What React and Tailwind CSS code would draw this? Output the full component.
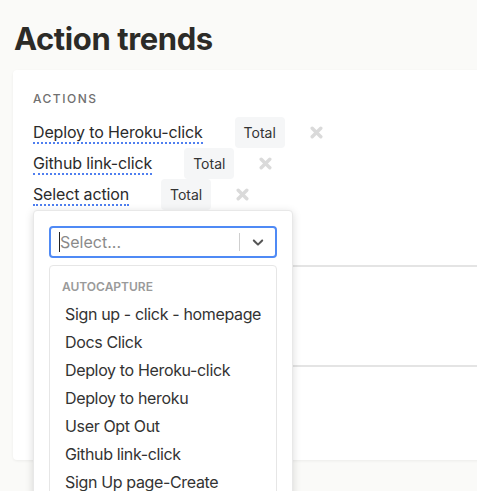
import React from 'react';

const font = { fontFamily: 'Inter, "Liberation Sans", sans-serif' };

function Cross() {
  return (
    <svg width="13" height="13" viewBox="0 0 13 13" className="text-[#dadada]">
      <path d="M2.2 2.2 L10.8 10.8 M10.8 2.2 L2.2 10.8" stroke="currentColor" strokeWidth="3.4" strokeLinecap="round" />
    </svg>
  );
}

function ActionRow({ label }) {
  return (
    <div className="flex items-center h-[31px]">
      <span className="text-[16px] leading-[20px] tracking-[-0.15px] text-[#2b2b2b] border-b-2 border-dotted border-[#4f7ff0]">{label}</span>
      <span className="ml-[32px] h-[31px] px-[9px] flex items-center rounded bg-[#f5f6f7] text-[14px] text-[#333]">Total</span>
      <span className="ml-[25px] flex items-center">
        <Cross />
      </span>
    </div>
  );
}

const options = [
  'Sign up - click - homepage',
  'Docs Click',
  'Deploy to Heroku-click',
  'Deploy to heroku',
  'User Opt Out',
  'Github link-click',
  'Sign Up page-Create',
  'Pricing click',
];

export default function App() {
  return (
    <div style={font} className="w-[477px] h-[491px] overflow-hidden bg-[#fafaf8] pl-[13px]">
      <h1 className="pt-[20px] pb-[12px] pl-[1px] text-[31px] leading-[38px] font-bold tracking-[-0.4px] text-[#2c2b27]">
        Action trends
      </h1>
      <div className="relative w-[520px] h-[390px] bg-white rounded shadow-[0_1px_3px_rgba(0,0,0,0.06)]">
        <div className="pt-[20px] px-[20px]">
          <div className="text-[12px] leading-[18px] tracking-[1.5px] font-medium text-[#707070]">ACTIONS</div>
          <div className="mt-[9px]">
            <ActionRow label="Deploy to Heroku-click" />
            <ActionRow label="Github link-click" />
            <ActionRow label="Select action" />
          </div>
          <div className="mt-[55px] border-t-2 border-[#e4e4e4] h-[100px]" />
          <div className="border-t-2 border-[#e4e4e4]" />
        </div>

        <div className="absolute left-[20px] top-[140px] w-[260px] h-[300px] bg-white rounded border border-[#e8e8e8] shadow-[0_2px_8px_rgba(0,0,0,0.15)] p-[15px]">
          <div className="flex items-center h-[32px] rounded border-2 border-[#4f8af5] pl-[8px] pr-[8px]">
            <span className="w-px h-[20px] bg-[#222]" />
            <span className="flex-1 text-[16px] text-[#8a8a8a]">Select...</span>
            <span className="w-px h-[18px] bg-[#cfcfcf] mr-[9px]" />
            <svg width="18" height="18" viewBox="0 0 20 20" className="text-[#555]">
              <path fill="currentColor" d="M4.516 7.548c0.436-0.446 1.043-0.481 1.576 0l3.908 3.747 3.908-3.747c0.533-0.481 1.141-0.446 1.574 0 0.436 0.445 0.408 1.197 0 1.615-0.406 0.418-4.695 4.502-4.695 4.502-0.217 0.223-0.502 0.335-0.787 0.335s-0.57-0.112-0.789-0.335c0 0-4.287-4.084-4.695-4.502s-0.436-1.17 0-1.615z" />
            </svg>
          </div>
          <div className="mt-[7px] rounded border border-[#e6e6e6] pt-[13px]">
            <div className="pl-[12px] text-[12px] leading-[16px] font-semibold text-[#9a9a9a]">AUTOCAPTURE</div>
            <div className="mt-[5px]">
              {options.map((o) => (
                <div key={o} className="h-[28px] flex items-center pl-[15px] text-[16px] tracking-[-0.35px] text-[#333]">
                  {o}
                </div>
              ))}
            </div>
          </div>
        </div>
      </div>
    </div>
  );
}
